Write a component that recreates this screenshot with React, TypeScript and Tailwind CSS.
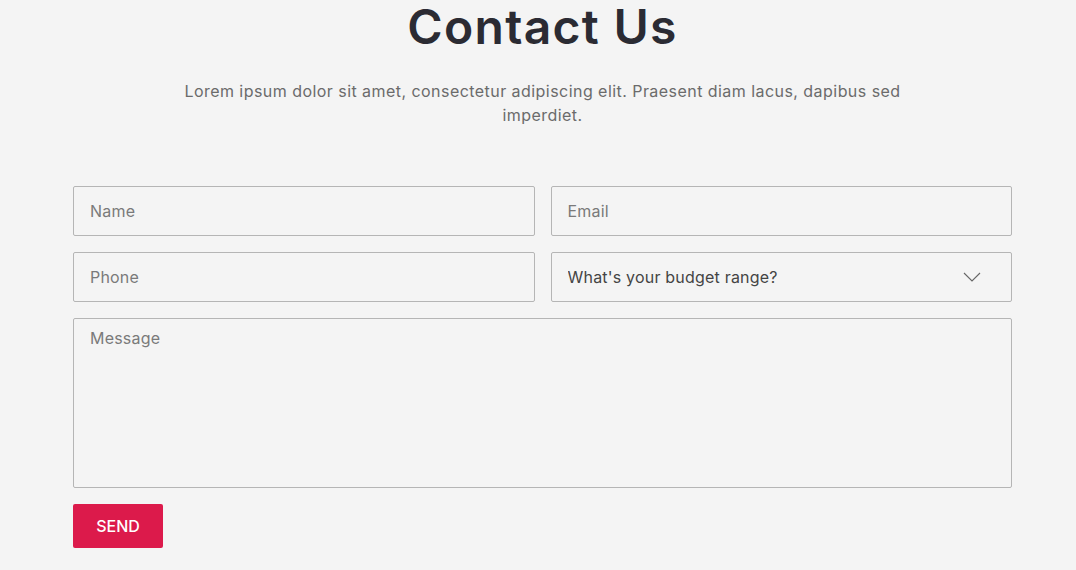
import { useState } from "react";

const font = { fontFamily: "Inter, 'Noto Sans', sans-serif" };

const inputCls =
  "h-[50px] w-full rounded-[2px] border border-[#b5b5b5] bg-[#f4f4f4] px-4 text-[16px] tracking-[0.2px] text-[#444] placeholder:text-[#7a7a7a] outline-none";

const ContactForm = () => {
  const [budget, setBudget] = useState("");

  return (
    <div className="min-h-screen bg-[#f4f4f4]" style={font}>
      <div className="ml-[73px] w-[939px]">
        <h1 className="pt-[3px] text-center text-[48px] font-semibold leading-[48px] tracking-[1.3px] text-[#2b2b33]">
          Contact Us
        </h1>
        <p className="mx-auto mt-[28px] w-[760px] text-center text-[16px] leading-[24px] tracking-[0.45px] text-[#6b6b6b]">
          Lorem ipsum dolor sit amet, consectetur adipiscing elit. Praesent diam lacus, dapibus sed imperdiet.
        </p>

        <form className="mt-[59px] flex flex-col gap-4" onSubmit={(e) => e.preventDefault()}>
          <div className="grid grid-cols-2 gap-4">
            <input className={inputCls} placeholder="Name" />
            <input className={inputCls} placeholder="Email" />
          </div>
          <div className="grid grid-cols-2 gap-4">
            <input className={inputCls} placeholder="Phone" />
            <div className="relative">
              <select
                value={budget}
                onChange={(e) => setBudget(e.target.value)}
                className={inputCls + " appearance-none text-[#3f3f46]"}
              >
                <option value="">What's your budget range?</option>
                <option value="1">Under $1,000</option>
                <option value="2">$1,000 - $5,000</option>
                <option value="3">Over $5,000</option>
              </select>
              <svg
                className="pointer-events-none absolute right-[31px] top-[20px]"
                width="18"
                height="10"
                viewBox="0 0 18 10"
                fill="none"
                stroke="#666"
                strokeWidth="1.1"
              >
                <path d="M1 1l8 8 8-8" />
              </svg>
            </div>
          </div>
          <textarea
            className="h-[170px] w-full resize-none rounded-[2px] border border-[#b5b5b5] bg-[#f4f4f4] px-4 pt-[7px] text-[16px] tracking-[0.2px] text-[#444] placeholder:text-[#7a7a7a] outline-none"
            placeholder="Message"
          />
          <div>
            <button
              type="submit"
              className="h-[44px] w-[90px] rounded-[2px] bg-[#dc1a4b] text-[16px] font-medium text-white"
            >
              SEND
            </button>
          </div>
        </form>
      </div>
    </div>
  );
};

export default function App() {
  return <ContactForm />;
}
